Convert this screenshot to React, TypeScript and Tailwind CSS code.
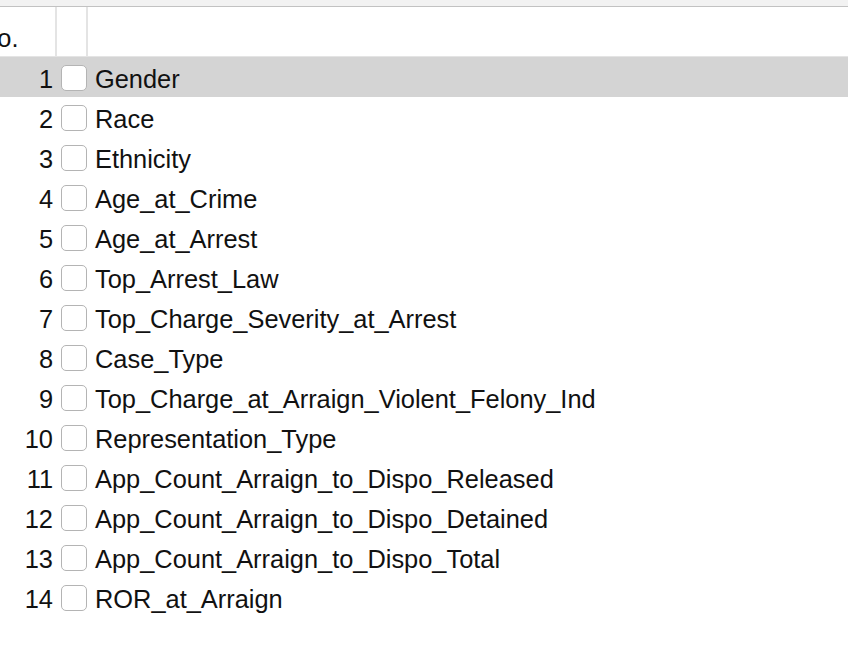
import React from "react";

const items = [
  "Gender",
  "Race",
  "Ethnicity",
  "Age_at_Crime",
  "Age_at_Arrest",
  "Top_Arrest_Law",
  "Top_Charge_Severity_at_Arrest",
  "Case_Type",
  "Top_Charge_at_Arraign_Violent_Felony_Ind",
  "Representation_Type",
  "App_Count_Arraign_to_Dispo_Released",
  "App_Count_Arraign_to_Dispo_Detained",
  "App_Count_Arraign_to_Dispo_Total",
  "ROR_at_Arraign",
];

export default function App() {
  return (
    <div
      className="w-[848px] h-[668px] bg-white overflow-hidden text-[#111]"
      style={{ fontFamily: '"Liberation Sans", Arial, Helvetica, sans-serif' }}
    >
      <div className="h-[6px] bg-[#f2f2f2]" />
      <div className="h-px bg-[#c2c2c2]" />
      <div className="flex h-[50px] border-b border-[#e4e4e4]">
        <div className="w-[57px] border-r-2 border-[#e4e4e4] overflow-hidden relative">
          <span className="absolute left-[-21px] top-[16px] text-[25.4px] leading-[30px]">No.</span>
        </div>
        <div className="w-[31px] border-r-2 border-[#e4e4e4]" />
        <div className="flex-1" />
      </div>
      <div>
        {items.map((name, i) => (
          <div
            key={name}
            className={
              "flex items-center h-[40px] " + (i === 0 ? "bg-[#d4d4d4]" : "bg-white")
            }
          >
            <div className="w-[53px] text-right text-[25.4px] leading-[30px] pt-[3px]">{i + 1}</div>
            <div className="ml-[8px] mt-[2px] w-[26px] h-[26px] rounded-[5px] border-[1.5px] border-[#b4b4b4] bg-white" />
            <div className="ml-[8px] text-[25.4px] leading-[30px] pt-[3px] whitespace-nowrap">{name}</div>
          </div>
        ))}
      </div>
    </div>
  );
}
